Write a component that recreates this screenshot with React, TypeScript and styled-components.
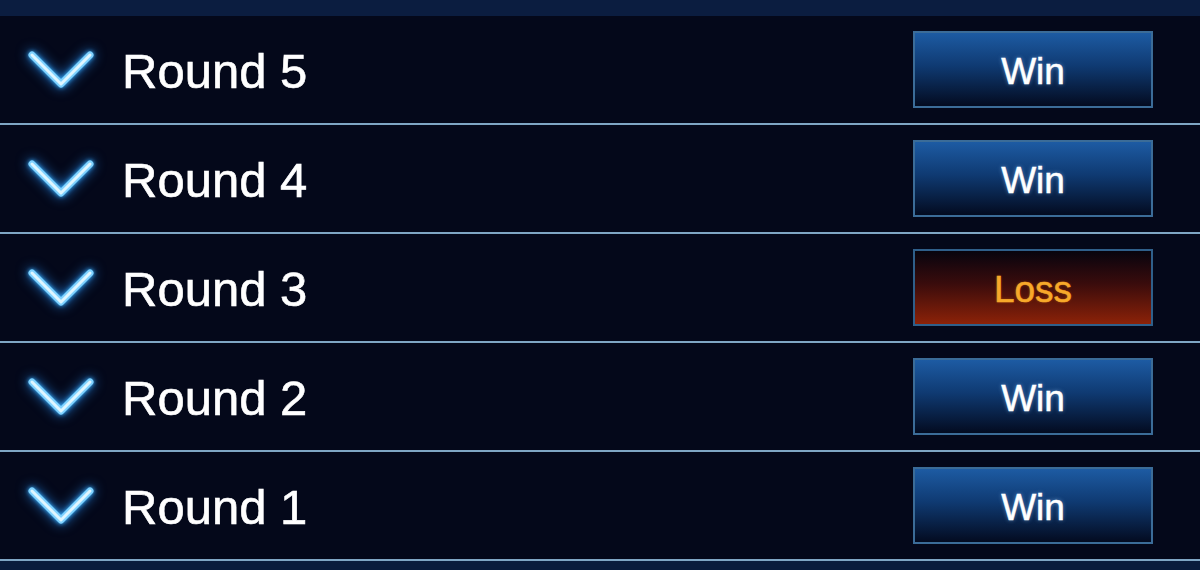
import React from 'react';
import styled, { createGlobalStyle } from 'styled-components';

const GlobalStyle = createGlobalStyle`
  html, body {
    margin: 0;
    padding: 0;
    background: #0a1c3c;
  }
  body {
    font-family: "Liberation Sans", Arial, Helvetica, sans-serif;
  }
`;

const Screen = styled.div`
  width: 1200px;
  height: 570px;
  overflow: hidden;
  display: flex;
  flex-direction: column;
  background: #0a1c3c;
`;

const TopBar = styled.div`
  height: 16px;
  flex: none;
  background: #0b1d40;
`;

const List = styled.div`
  display: flex;
  flex-direction: column;
  background: #04081a;
`;

const Row = styled.div`
  height: 109px;
  box-sizing: border-box;
  display: flex;
  align-items: center;
  padding: 3px 47px 0 26px;
  border-bottom: 2px solid #7fa6c4;
`;

const Chevron = styled.svg`
  width: 70px;
  height: 46px;
  flex: none;
  overflow: visible;
  filter: drop-shadow(0 0 2px #39b2ff) drop-shadow(0 0 6px rgba(40, 150, 255, 0.75));
`;

const Title = styled.span`
  margin-left: 26px;
  flex: 1;
  color: #ffffff;
  font-size: 49px;
  line-height: 1;
  -webkit-text-stroke: 0.6px #ffffff;
`;

type ResultProps = { $loss?: boolean };

const Result = styled.div<ResultProps>`
  width: 240px;
  height: 77px;
  margin-top: -3px;
  box-sizing: border-box;
  display: flex;
  align-items: center;
  justify-content: center;
  padding-top: 4px;
  border: 2px solid ${p => (p.$loss ? '#2f5f8a' : '#3b6c98')};
  background: ${p =>
    p.$loss
      ? 'linear-gradient(to bottom, #07040e 0%, #3a0c0c 45%, #8c2208 100%)'
      : 'linear-gradient(to bottom, #1d5ba3 0%, #0f3a72 45%, #030b20 100%)'};
  color: ${p => (p.$loss ? '#f7a92a' : '#ffffff')};
  font-size: 37px;
  -webkit-text-stroke: 0.5px ${p => (p.$loss ? '#f7a92a' : '#ffffff')};
  text-shadow: ${p => (p.$loss ? '0 0 3px rgba(255, 140, 0, 0.4)' : '0 0 4px rgba(150, 200, 255, 0.6)')};
`;

const rounds = [
  { n: 5, loss: false },
  { n: 4, loss: false },
  { n: 3, loss: true },
  { n: 2, loss: false },
  { n: 1, loss: false },
];

const ChevronIcon = () => (
  <Chevron viewBox="0 0 70 46">
    <polyline
      points="6,7 35,36 64,7"
      fill="none"
      stroke="#7fd2ff"
      strokeWidth="7"
      strokeLinecap="round"
      strokeLinejoin="round"
    />
    <polyline
      points="6,7 35,36 64,7"
      fill="none"
      stroke="#dff6ff"
      strokeWidth="3"
      strokeLinecap="round"
      strokeLinejoin="round"
    />
  </Chevron>
);

export default function App() {
  return (
    <Screen>
      <GlobalStyle />
      <TopBar />
      <List>
        {rounds.map(r => (
          <Row key={r.n}>
            <ChevronIcon />
            <Title>Round {r.n}</Title>
            <Result $loss={r.loss}>{r.loss ? 'Loss' : 'Win'}</Result>
          </Row>
        ))}
      </List>
    </Screen>
  );
}
